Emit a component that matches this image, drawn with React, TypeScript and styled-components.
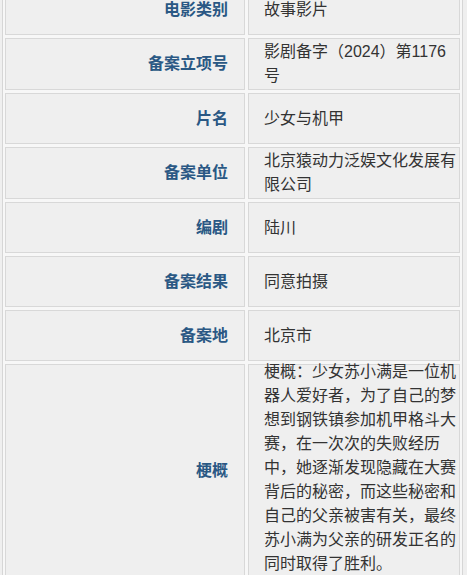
import React from 'react';
import styled, { createGlobalStyle } from 'styled-components';

const GlobalStyle = createGlobalStyle`
  html,
  body {
    margin: 0;
    padding: 0;
    background: #efefef;
    overflow: hidden;
  }

  body {
    font-family: 'Liberation Sans', 'Noto Sans CJK SC', sans-serif;
    font-size: 16px;
  }
`;

const Table = styled.div`
  background: #f7f7f7;
  border: 1px solid #d6d6d6;
  border-top: none;
  box-sizing: border-box;
  display: grid;
  gap: 3px;
  grid-template-columns: 240px 1fr;
  margin: -18px 0 0 2px;
  padding: 2px;
  width: 461px;
`;

const Cell = styled.div`
  align-items: center;
  background: #efefef;
  border: 1px solid #d8d8d8;
  box-sizing: border-box;
  display: flex;
  line-height: 24px;
  min-height: 51px;
`;

const Label = styled(Cell)`
  color: #2a5884;
  font-weight: bold;
  justify-content: flex-end;
  padding: 1px 16px 1px 0;
`;

const Value = styled(Cell)<{ $long?: boolean }>`
  color: #333;
  padding: ${({ $long }) => ($long ? '0 0 0 15px' : '1px 0 1px 15px')};
`;

const ValueText = styled.div<{ $long?: boolean }>`
  margin-top: ${({ $long }) => ($long ? '-5px' : '0')};
  min-width: 0;
  width: 100%;
`;

const rows: [string, string][] = [
  ['电影类别', '故事影片'],
  ['备案立项号', '影剧备字（2024）第1176号'],
  ['片名', '少女与机甲'],
  ['备案单位', '北京猿动力泛娱文化发展有限公司'],
  ['编剧', '陆川'],
  ['备案结果', '同意拍摄'],
  ['备案地', '北京市'],
  [
    '梗概',
    '梗概：少女苏小满是一位机器人爱好者，为了自己的梦想到钢铁镇参加机甲格斗大赛，在一次次的失败经历中，她逐渐发现隐藏在大赛背后的秘密，而这些秘密和自己的父亲被害有关，最终苏小满为父亲的研发正名的同时取得了胜利。',
  ],
];

const App: React.FC = () => {
  return (
    <>
      <GlobalStyle />
      <Table>
        {rows.map(([label, value]) => {
          const long = value.length > 40;
          return (
            <React.Fragment key={label}>
              <Label>{label}</Label>
              <Value $long={long}>
                <ValueText $long={long}>{value}</ValueText>
              </Value>
            </React.Fragment>
          );
        })}
      </Table>
    </>
  );
};

export default App;
